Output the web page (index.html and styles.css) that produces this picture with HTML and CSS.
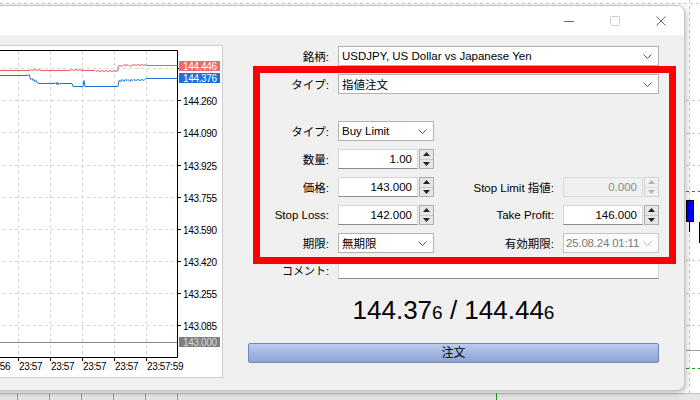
FILE: index.html
```html
<!DOCTYPE html>
<html lang="ja">
<head>
<meta charset="utf-8">
<title>注文</title>
<link rel="stylesheet" href="styles.css">
</head>
<body>
<div class="desktop">
  <svg class="backdrop" width="700" height="400" viewBox="0 0 700 400">
    <rect width="700" height="400" fill="#ffffff"/>
    <g stroke="#cccccc" stroke-dasharray="3 3" fill="none">
      <line x1="0" y1="3.5" x2="700" y2="3.5"/>
      <line x1="689.5" y1="0" x2="689.5" y2="393"/>
      <line x1="686" y1="100.5" x2="700" y2="100.5"/>
      <line x1="686" y1="133.5" x2="700" y2="133.5"/>
      <line x1="686" y1="165.5" x2="700" y2="165.5"/>
      <line x1="686" y1="260.5" x2="700" y2="260.5"/>
      <line x1="686" y1="293.5" x2="700" y2="293.5"/>
      <line x1="686" y1="325.5" x2="700" y2="325.5"/>
    </g>
    <line x1="686" y1="191.5" x2="700" y2="191.5" stroke="#1e6fd6" stroke-dasharray="3 3"/>
    <line x1="686" y1="350.5" x2="700" y2="350.5" stroke="#9a9a9a"/>
    <line x1="686" y1="368.5" x2="700" y2="368.5" stroke="#1a9a1a" stroke-dasharray="3 3"/>
    <line x1="689.5" y1="222" x2="689.5" y2="232" stroke="#000"/>
    <rect x="686.5" y="200.5" width="7" height="21" fill="#0000ff" stroke="#000"/>
    <line x1="699.5" y1="222" x2="699.5" y2="243" stroke="#000"/>
    <rect x="0" y="393" width="700" height="7" fill="#e6e6e6"/>
    <line x1="0" y1="393.5" x2="700" y2="393.5" stroke="#c4c4c4"/>
    <g stroke="#9a9a9a">
      <line x1="17.5" y1="394" x2="17.5" y2="400"/>
      <line x1="49.5" y1="394" x2="49.5" y2="400"/>
      <line x1="81.5" y1="394" x2="81.5" y2="400"/>
      <line x1="113.5" y1="394" x2="113.5" y2="400"/>
      <line x1="145.5" y1="394" x2="145.5" y2="400"/>
      <line x1="177.5" y1="394" x2="177.5" y2="400"/>
    </g>
    <line x1="496.5" y1="393" x2="496.5" y2="400" stroke="#1a9a1a"/>
  </svg>

  <div class="dialog">
    <div class="titlebar">
      <div class="caption-btn">
        <svg width="10" height="10" viewBox="0 0 10 10"><line x1="0" y1="5.5" x2="10" y2="5.5" stroke="#6b6b6b"/></svg>
      </div>
      <div class="caption-btn">
        <svg width="10" height="10" viewBox="0 0 10 10"><rect x="0.5" y="0.5" width="9" height="9" rx="1" fill="none" stroke="#cfcfcf"/></svg>
      </div>
      <div class="caption-btn">
        <svg width="10" height="10" viewBox="0 0 10 10"><path d="M0.5 0.5 L9.5 9.5 M9.5 0.5 L0.5 9.5" stroke="#6b6b6b" fill="none"/></svg>
      </div>
    </div>

    <div class="dialog-body">
      <div class="chart-panel">
        <svg class="tick-chart" width="231" height="331" viewBox="-9 46 231 331">
          <g stroke="#d6d6d6" stroke-dasharray="3 3">
            <line x1="18.5" y1="51" x2="18.5" y2="357"/>
            <line x1="50.5" y1="51" x2="50.5" y2="357"/>
            <line x1="82.5" y1="51" x2="82.5" y2="357"/>
            <line x1="114.5" y1="51" x2="114.5" y2="357"/>
            <line x1="146.5" y1="51" x2="146.5" y2="357"/>
            <line x1="-9" y1="68.5" x2="177" y2="68.5"/>
            <line x1="-9" y1="100.5" x2="177" y2="100.5"/>
            <line x1="-9" y1="132.5" x2="177" y2="132.5"/>
            <line x1="-9" y1="165.5" x2="177" y2="165.5"/>
            <line x1="-9" y1="197.5" x2="177" y2="197.5"/>
            <line x1="-9" y1="229.5" x2="177" y2="229.5"/>
            <line x1="-9" y1="261.5" x2="177" y2="261.5"/>
            <line x1="-9" y1="293.5" x2="177" y2="293.5"/>
            <line x1="-9" y1="325.5" x2="177" y2="325.5"/>
          </g>
          <line x1="-9" y1="342.5" x2="177" y2="342.5" stroke="#8a8a8a"/>
          <polyline fill="none" stroke="#e8605f" points="-9,70.5 30,70.5 31,69.5 33,70.5 35,69.5 37,70.5 39,69.5 41,70.5 70,70.5 72,69.5 74,70.5 76,69.5 78,70.5 80,69.5 82,70.5 95,70.5 96,71.5 98,70.5 100,71.5 102,70.5 104,71.5 106,70.5 108,71.5 110,70.5 112,71.5 114,70.5 116,71.5 118,70.5 118,66.5 120,65.5 122,66.5 124,64.5 126,65.5 128,64.5 130,66.5 132,65.5 134,64.5 136,65.5 138,64.5 140,65.5 142,64.5 144,65.5 146,64.5 147,65.5 177,65.5"/>
          <polyline fill="none" stroke="#1e6fd6" points="-9,75.5 28,75.5 29,74.5 30,77.5 31,79.5 32,78.5 33,80.5 34,79.5 35,81.5 36,80.5 37,82.5 39,83.5 55,83.5 56,82.5 57,84.5 58,82.5 59,84.5 60,83.5 72,83.5 73,86.5 83,86.5 84,80.5 85,86.5 118,86.5 119,80.5 121,81.5 122,79.5 124,81.5 125,79.5 127,80.5 128,79.5 130,81.5 131,79.5 133,80.5 134,79.5 136,80.5 138,79.5 140,80.5 142,79.5 144,80.5 146,78.5 177,78.5"/>
          <path d="M-9 50.5 H177.5 V357.5 H-9" fill="none" stroke="#000"/>
          <g stroke="#000">
            <line x1="177" y1="68.5" x2="181" y2="68.5"/>
            <line x1="177" y1="100.5" x2="181" y2="100.5"/>
            <line x1="177" y1="132.5" x2="181" y2="132.5"/>
            <line x1="177" y1="165.5" x2="181" y2="165.5"/>
            <line x1="177" y1="197.5" x2="181" y2="197.5"/>
            <line x1="177" y1="229.5" x2="181" y2="229.5"/>
            <line x1="177" y1="261.5" x2="181" y2="261.5"/>
            <line x1="177" y1="293.5" x2="181" y2="293.5"/>
            <line x1="177" y1="325.5" x2="181" y2="325.5"/>
            <line x1="18.5" y1="357" x2="18.5" y2="361"/>
            <line x1="50.5" y1="357" x2="50.5" y2="361"/>
            <line x1="82.5" y1="357" x2="82.5" y2="361"/>
            <line x1="114.5" y1="357" x2="114.5" y2="361"/>
            <line x1="146.5" y1="357" x2="146.5" y2="361"/>
          </g>
          <g class="axis-text">
            <text x="183" y="104.5">144.260</text>
            <text x="183" y="136.5">144.090</text>
            <text x="183" y="169.5">143.925</text>
            <text x="183" y="201.5">143.755</text>
            <text x="183" y="233.5">143.590</text>
            <text x="183" y="265.5">143.420</text>
            <text x="183" y="297.5">143.255</text>
            <text x="183" y="329.5">143.085</text>
            <text x="-13" y="370">23:56</text>
            <text x="19" y="370">23:57</text>
            <text x="51" y="370">23:57</text>
            <text x="83" y="370">23:57</text>
            <text x="115" y="370">23:57</text>
            <text x="147" y="370">23:57:59</text>
          </g>
          <rect x="179" y="61" width="41" height="10" fill="#ec6a69"/>
          <rect x="179" y="73" width="41" height="10" fill="#1e6fd6"/>
          <rect x="179" y="337" width="41" height="10" fill="#7f7f7f"/>
          <g class="axis-text marker-text">
            <text x="183" y="69.5">144.446</text>
            <text x="183" y="81.5">144.376</text>
            <text x="183" y="345.5" class="muted">143.000</text>
          </g>
        </svg>
      </div>

      <div class="order-form">
        <div class="form-grid">
          <div class="lbl">銘柄:</div>
          <div class="combo wide"><span>USDJPY, US Dollar vs Japanese Yen</span><svg class="chev" width="9" height="5" viewBox="0 0 9 5"><path d="M0.5 0.5 L4.5 4.5 L8.5 0.5" fill="none" stroke="#555"/></svg></div>

          <div class="lbl">タイプ:</div>
          <div class="combo wide"><span>指値注文</span><svg class="chev" width="9" height="5" viewBox="0 0 9 5"><path d="M0.5 0.5 L4.5 4.5 L8.5 0.5" fill="none" stroke="#555"/></svg></div>

          <div class="spacer"></div>

          <div class="lbl">タイプ:</div>
          <div class="combo"><span>Buy Limit</span><svg class="chev" width="9" height="5" viewBox="0 0 9 5"><path d="M0.5 0.5 L4.5 4.5 L8.5 0.5" fill="none" stroke="#555"/></svg></div>
          <div></div><div></div>

          <div class="lbl">数量:</div>
          <div class="num"><div class="field">1.00</div><div class="spin"><div class="spin-half"><svg width="7" height="4" viewBox="0 0 7 4"><path d="M3.5 0 L7 4 L0 4 Z" fill="#222"/></svg></div><div class="spin-half"><svg width="7" height="4" viewBox="0 0 7 4"><path d="M0 0 L7 0 L3.5 4 Z" fill="#222"/></svg></div></div></div>
          <div></div><div></div>

          <div class="lbl">価格:</div>
          <div class="num"><div class="field">143.000</div><div class="spin"><div class="spin-half"><svg width="7" height="4" viewBox="0 0 7 4"><path d="M3.5 0 L7 4 L0 4 Z" fill="#222"/></svg></div><div class="spin-half"><svg width="7" height="4" viewBox="0 0 7 4"><path d="M0 0 L7 0 L3.5 4 Z" fill="#222"/></svg></div></div></div>
          <div class="lbl">Stop Limit 指値:</div>
          <div class="num disabled"><div class="field">0.000</div><div class="spin"><div class="spin-half"><svg width="7" height="4" viewBox="0 0 7 4"><path d="M3.5 0 L7 4 L0 4 Z" fill="#b4b4b4"/></svg></div><div class="spin-half"><svg width="7" height="4" viewBox="0 0 7 4"><path d="M0 0 L7 0 L3.5 4 Z" fill="#b4b4b4"/></svg></div></div></div>

          <div class="lbl">Stop Loss:</div>
          <div class="num"><div class="field">142.000</div><div class="spin"><div class="spin-half"><svg width="7" height="4" viewBox="0 0 7 4"><path d="M3.5 0 L7 4 L0 4 Z" fill="#222"/></svg></div><div class="spin-half"><svg width="7" height="4" viewBox="0 0 7 4"><path d="M0 0 L7 0 L3.5 4 Z" fill="#222"/></svg></div></div></div>
          <div class="lbl">Take Profit:</div>
          <div class="num"><div class="field">146.000</div><div class="spin"><div class="spin-half"><svg width="7" height="4" viewBox="0 0 7 4"><path d="M3.5 0 L7 4 L0 4 Z" fill="#222"/></svg></div><div class="spin-half"><svg width="7" height="4" viewBox="0 0 7 4"><path d="M0 0 L7 0 L3.5 4 Z" fill="#222"/></svg></div></div></div>

          <div class="lbl">期限:</div>
          <div class="combo"><span>無期限</span><svg class="chev" width="9" height="5" viewBox="0 0 9 5"><path d="M0.5 0.5 L4.5 4.5 L8.5 0.5" fill="none" stroke="#555"/></svg></div>
          <div class="lbl">有効期限:</div>
          <div class="combo disabled"><span>25.08.24 01:11</span><svg class="chev" width="9" height="5" viewBox="0 0 9 5"><path d="M0.5 0.5 L4.5 4.5 L8.5 0.5" fill="none" stroke="#b8b8b8"/></svg></div>

          <div class="lbl small-lbl">コメント:</div>
          <div class="text-field wide"></div>
        </div>

        <div class="quote">144.37<span class="pip">6</span> / 144.44<span class="pip">6</span></div>

        <div class="order-btn">注文</div>

        <div class="highlight"></div>
      </div>
    </div>
  </div>
</div>
</body>
</html>
```

FILE: styles.css
```css
* {
  box-sizing: border-box;
}

html, body {
  margin: 0;
  padding: 0;
}

body {
  width: 700px;
  height: 400px;
  overflow: hidden;
  font-family: "Liberation Sans", "Noto Sans CJK JP", sans-serif;
  font-size: 11.5px;
  color: #000;
  background: #fff;
}

.desktop {
  position: relative;
  width: 700px;
  height: 400px;
  overflow: hidden;
}

.backdrop {
  display: block;
}

/* ---------- dialog window ---------- */
.dialog {
  position: absolute;
  left: -20px;
  top: 5px;
  width: 705px;
  height: 386px;
  background: #f0f0f0;
  border: 1px solid #c4c4c4;
  border-radius: 8px;
  overflow: hidden;
  box-shadow: 1px 2px 6px rgba(0, 0, 0, 0.28);
}

.titlebar {
  height: 29px;
  background: #ffffff;
  display: flex;
  justify-content: flex-end;
}

.caption-btn {
  width: 46px;
  height: 29px;
  display: flex;
  align-items: center;
  justify-content: center;
}

.caption-btn svg {
  display: block;
}

.dialog-body {
  display: flex;
  align-items: flex-start;
  padding: 10px 0 0 9px;
}

/* ---------- tick chart ---------- */
.chart-panel {
  width: 233px;
  height: 333px;
  background: #fff;
  border: 1px solid #cdcdcd;
  flex: none;
}

.tick-chart {
  display: block;
}

.axis-text text {
  font-family: "Liberation Sans", sans-serif;
  font-size: 10px;
  letter-spacing: -0.35px;
  fill: #000;
}

.marker-text text {
  fill: #ffffff;
}

.marker-text text.muted {
  fill: #d8d8d8;
}

/* ---------- order form ---------- */
.order-form {
  position: relative;
  width: 411px;
  margin-left: 25px;
  margin-top: 1px;
  flex: none;
}

.form-grid {
  display: grid;
  grid-template-columns: 82px 96px 1fr 96px;
  grid-template-rows: 20px 20px 11px 20px 20px 20px 20px 20px 18px;
  column-gap: 8px;
  row-gap: 8px;
}

.lbl {
  display: flex;
  align-items: center;
  justify-content: flex-end;
  white-space: nowrap;
  padding-right: 1px;
}

.small-lbl {
  font-size: 11px;
}

.spacer {
  grid-column: 1 / -1;
}

.wide {
  grid-column: 2 / -1;
}

.combo {
  display: flex;
  align-items: center;
  justify-content: space-between;
  background: #fff;
  border: 1px solid #b2b2b2;
  padding: 0 6px 0 3px;
  white-space: nowrap;
  overflow: hidden;
}

.combo .chev {
  display: block;
  flex: none;
}

.combo.disabled {
  background: #fbfbfb;
  border-color: #c6c6c6;
  color: #7a7a7a;
  padding-left: 2px;
  letter-spacing: -0.2px;
}

.num {
  display: flex;
  gap: 1px;
}

.field {
  flex: 1;
  background: #fff;
  border: 1px solid #d6d6d6;
  border-bottom-color: #8a8a8a;
  text-align: right;
  padding-right: 5px;
  line-height: 18px;
}

.spin {
  width: 15px;
  display: flex;
  flex-direction: column;
  border: 1px solid #adadad;
  background: #e6e6e6;
}

.spin-half {
  flex: 1;
  display: flex;
  align-items: center;
  justify-content: center;
}

.spin-half + .spin-half {
  border-top: 1px solid #c9c9c9;
}

.spin-half svg {
  display: block;
}

.num.disabled .field {
  background: #f0f0f0;
  border-color: #dadada;
  color: #8c8c8c;
}

.num.disabled .spin {
  background: #f0f0f0;
  border-color: #d4d4d4;
}

.num.disabled .spin-half + .spin-half {
  border-top-color: #e0e0e0;
}

.text-field {
  background: #fff;
  border: 1px solid #d6d6d6;
  border-bottom-color: #8a8a8a;
}

.quote {
  margin-top: 16px;
  height: 31px;
  line-height: 31px;
  text-align: center;
  font-size: 26px;
  white-space: nowrap;
}

.quote .pip {
  font-size: 19px;
}

.order-btn {
  margin-top: 17px;
  height: 20px;
  line-height: 18px;
  text-align: center;
  font-size: 12px;
  border: 1px solid #7387b8;
  border-radius: 2px;
  background: linear-gradient(#bccdee, #9fb4e2 55%, #8ea4d6);
}

.highlight {
  position: absolute;
  left: 5px;
  top: 20px;
  width: 423px;
  height: 198px;
  border: 7px solid #ff0000;
  pointer-events: none;
}
```
